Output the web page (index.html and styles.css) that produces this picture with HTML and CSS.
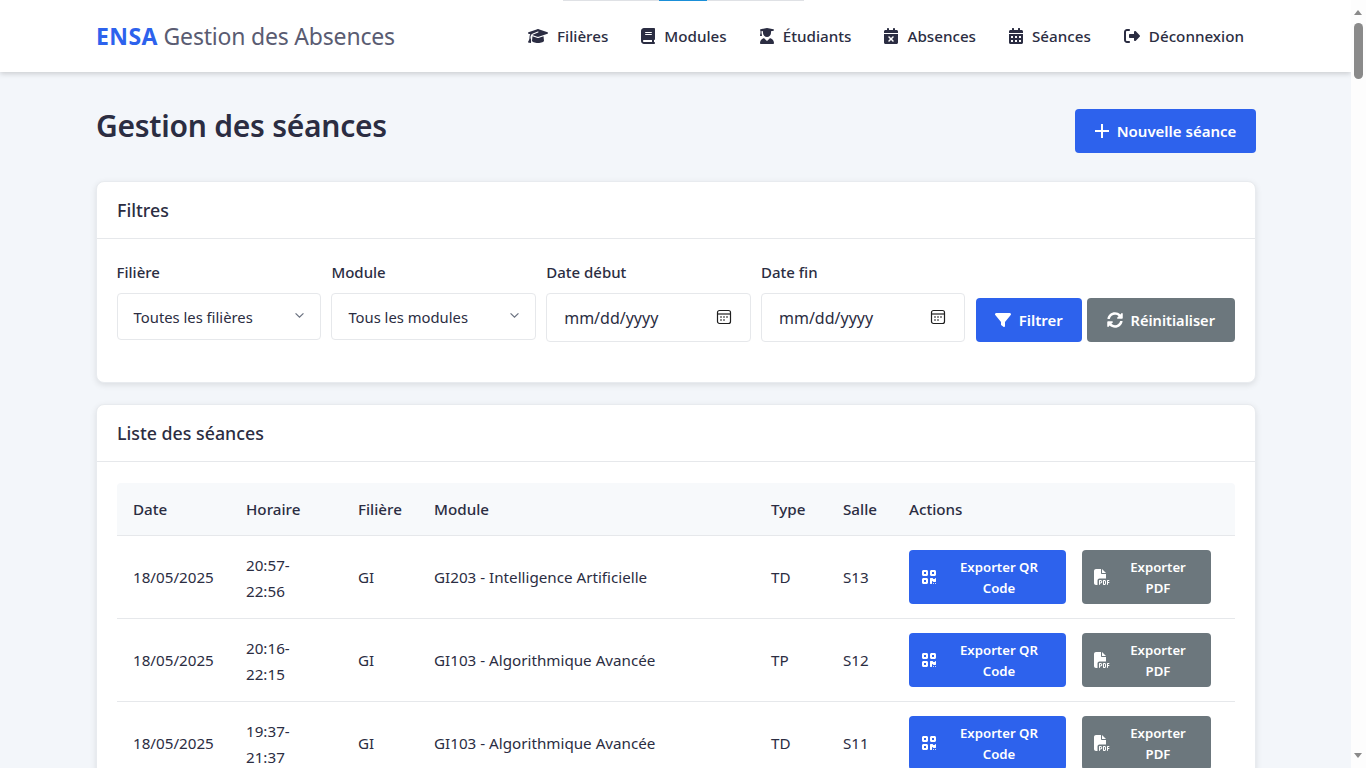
FILE: index.html
```html
<!DOCTYPE html>
<html lang="fr">
<head>
<meta charset="utf-8">
<title>Gestion des séances</title>
<link rel="stylesheet" href="styles.css">
</head>
<body>
<svg class="sprite" width="0" height="0">
<defs>
<symbol id="i-grad" viewBox="0 0 640 512"><path d="M320 32c-8.1 0-16.1 1.4-23.7 4.1L15.8 137.4C6.3 140.9 0 149.9 0 160s6.3 19.1 15.8 22.6l57.9 20.9C57.3 229.3 48 259.8 48 291.9v28.1c0 28.4-10.8 57.7-22.3 80.8c-6.5 13-13.9 25.8-22.5 37.6C0 442.7-.9 448.3 .9 453.4s6 8.9 11.2 10.2l64 16c4.2 1.1 8.7 .3 12.4-2s6.3-6.1 7.1-10.4c8.6-42.8 4.3-81.2-2.1-108.7C90.3 344.3 86 329.8 80 316.5V291.9c0-30.2 10.2-58.7 27.9-81.5c12.9-15.5 29.6-28 49.2-35.7l157-61.7c8.2-3.2 17.5 .8 20.7 9s-.8 17.5-9 20.7l-157 61.7c-12.4 4.9-23.3 12.4-32.2 21.6l159.6 57.6c7.6 2.7 15.6 4.1 23.7 4.1s16.1-1.4 23.7-4.1L624.2 182.6c9.5-3.4 15.8-12.5 15.8-22.6s-6.3-19.1-15.8-22.6L343.7 36.1C336.1 33.4 328.1 32 320 32zM128 408c0 35.3 86 72 192 72s192-36.7 192-72L496.7 262.6 354.5 314c-11.1 4-22.8 6-34.5 6s-23.5-2-34.5-6L143.3 262.6 128 408z"/></symbol>
<symbol id="i-book" viewBox="0 0 448 512"><path d="M96 0C43 0 0 43 0 96V416c0 53 43 96 96 96H384h32c17.7 0 32-14.3 32-32s-14.3-32-32-32V384c17.7 0 32-14.3 32-32V32c0-17.7-14.3-32-32-32H384 96zm0 384H352v64H96c-17.7 0-32-14.3-32-32s14.3-32 32-32zm32-240c0-8.8 7.2-16 16-16H336c8.8 0 16 7.2 16 16s-7.2 16-16 16H144c-8.8 0-16-7.2-16-16zm16 48H336c8.8 0 16 7.2 16 16s-7.2 16-16 16H144c-8.8 0-16-7.2-16-16s7.2-16 16-16z"/></symbol>
<symbol id="i-student" viewBox="0 0 448 512"><path d="M219.3 .5c3.1-.6 6.3-.6 9.4 0l200 40C439.9 42.7 448 52.6 448 64s-8.1 21.3-19.3 23.5L352 102.9V160c0 70.7-57.3 128-128 128s-128-57.3-128-128V102.9L48 93.3v65.1l15.7 78.4c.9 4.7-.3 9.6-3.3 13.3s-7.6 5.9-12.4 5.9H16c-4.8 0-9.3-2.1-12.4-5.9s-4.3-8.6-3.3-13.3L16 158.4V86.6C6.5 83.3 0 74.3 0 64C0 52.6 8.1 42.7 19.3 40.5l200-40zM111.9 327.7c10.5-3.4 21.8 .4 29.4 8.5l71 75.5c6.3 6.7 17 6.7 23.3 0l71-75.5c7.6-8.1 18.9-11.9 29.4-8.5C401 348.6 448 409.4 448 481.3c0 17-13.8 30.7-30.7 30.7H30.7C13.8 512 0 498.2 0 481.3c0-71.9 47-132.7 111.9-153.6z"/></symbol>
<symbol id="i-xcal" viewBox="0 0 448 512"><path d="M128 0c17.7 0 32 14.3 32 32V64H288V32c0-17.7 14.3-32 32-32s32 14.3 32 32V64h48c26.5 0 48 21.5 48 48v48H0V112C0 85.5 21.5 64 48 64H96V32c0-17.7 14.3-32 32-32zM0 192H448V464c0 26.5-21.5 48-48 48H48c-26.5 0-48-21.5-48-48V192zM305 305c9.4-9.4 9.4-24.6 0-33.9s-24.6-9.4-33.9 0l-47 47-47-47c-9.4-9.4-24.6-9.4-33.9 0s-9.4 24.6 0 33.9l47 47-47 47c-9.4 9.4-9.4 24.6 0 33.9s24.6 9.4 33.9 0l47-47 47 47c9.4 9.4 24.6 9.4 33.9 0s9.4-24.6 0-33.9l-47-47 47-47z"/></symbol>
<symbol id="i-cal" viewBox="0 0 448 512"><path d="M0 464c0 26.5 21.5 48 48 48h352c26.5 0 48-21.5 48-48V192H0v272zm320-196c0-6.6 5.4-12 12-12h40c6.6 0 12 5.4 12 12v40c0 6.6-5.4 12-12 12h-40c-6.6 0-12-5.4-12-12v-40zm0 128c0-6.6 5.4-12 12-12h40c6.6 0 12 5.4 12 12v40c0 6.6-5.4 12-12 12h-40c-6.6 0-12-5.4-12-12v-40zM192 268c0-6.6 5.4-12 12-12h40c6.6 0 12 5.4 12 12v40c0 6.6-5.4 12-12 12h-40c-6.6 0-12-5.4-12-12v-40zm0 128c0-6.6 5.4-12 12-12h40c6.6 0 12 5.4 12 12v40c0 6.6-5.4 12-12 12h-40c-6.6 0-12-5.4-12-12v-40zM64 268c0-6.6 5.4-12 12-12h40c6.6 0 12 5.4 12 12v40c0 6.6-5.4 12-12 12H76c-6.6 0-12-5.4-12-12v-40zm0 128c0-6.6 5.4-12 12-12h40c6.6 0 12 5.4 12 12v40c0 6.6-5.4 12-12 12H76c-6.6 0-12-5.4-12-12v-40zM400 64h-48V16c0-8.8-7.2-16-16-16h-32c-8.8 0-16 7.2-16 16v48H160V16c0-8.8-7.2-16-16-16h-32c-8.8 0-16 7.2-16 16v48H48C21.5 64 0 85.5 0 112v48h448v-48c0-26.5-21.5-48-48-48z"/></symbol>
<symbol id="i-out" viewBox="0 0 512 512"><path d="M377.9 105.9L500.7 228.7c7.2 7.2 11.3 17.1 11.3 27.3s-4.1 20.1-11.3 27.3L377.9 406.1c-6.4 6.4-15 9.9-24 9.9c-18.7 0-33.9-15.2-33.9-33.9l0-62.1-128 0c-17.7 0-32-14.3-32-32l0-64c0-17.7 14.3-32 32-32l128 0 0-62.1c0-18.7 15.2-33.9 33.9-33.9c9 0 17.6 3.6 24 9.9zM160 96L96 96c-17.7 0-32 14.3-32 32l0 256c0 17.7 14.3 32 32 32l64 0c17.7 0 32 14.3 32 32s-14.3 32-32 32l-64 0c-53 0-96-43-96-96L0 128C0 75 43 32 96 32l64 0c17.7 0 32 14.3 32 32s-14.3 32-32 32z"/></symbol>
<symbol id="i-qr" viewBox="0 0 448 512"><path d="M0 80C0 53.5 21.5 32 48 32h96c26.5 0 48 21.5 48 48v96c0 26.5-21.5 48-48 48H48c-26.5 0-48-21.5-48-48V80zM64 96v64h64V96H64zM0 336c0-26.5 21.5-48 48-48h96c26.5 0 48 21.5 48 48v96c0 26.5-21.5 48-48 48H48c-26.5 0-48-21.5-48-48V336zm64 16v64h64V352H64zM304 32h96c26.5 0 48 21.5 48 48v96c0 26.5-21.5 48-48 48H304c-26.5 0-48-21.5-48-48V80c0-26.5 21.5-48 48-48zm80 64H320v64h64V96zM256 304c0-8.8 7.2-16 16-16h64c8.8 0 16 7.2 16 16s7.2 16 16 16h32c8.8 0 16-7.2 16-16s7.2-16 16-16s16 7.2 16 16v96c0 8.8-7.2 16-16 16H368c-8.8 0-16-7.2-16-16s-7.2-16-16-16s-16 7.2-16 16v64c0 8.8-7.2 16-16 16H272c-8.8 0-16-7.2-16-16V304zM368 480a16 16 0 1 1 0-32 16 16 0 1 1 0 32zm64 0a16 16 0 1 1 0-32 16 16 0 1 1 0 32z"/></symbol>
<symbol id="i-pdf" viewBox="0 0 512 512"><path d="M0 64C0 28.7 28.7 0 64 0H224V128c0 17.7 14.3 32 32 32H384V304H176c-35.3 0-64 28.7-64 64V512H64c-35.3 0-64-28.7-64-64V64zm384 64H256V0L384 128zM176 352h32c30.9 0 56 25.1 56 56s-25.1 56-56 56H192v32c0 8.8-7.2 16-16 16s-16-7.2-16-16V448 368c0-8.8 7.2-16 16-16zm32 80c13.3 0 24-10.7 24-24s-10.7-24-24-24H192v48h16zm96-80h32c26.5 0 48 21.5 48 48v64c0 26.5-21.5 48-48 48H304c-8.8 0-16-7.2-16-16V368c0-8.8 7.2-16 16-16zm32 128c8.8 0 16-7.2 16-16V400c0-8.8-7.2-16-16-16H320v96h16zm80-112c0-8.8 7.2-16 16-16h48c8.8 0 16 7.2 16 16s-7.2 16-16 16H448v32h32c8.8 0 16 7.2 16 16s-7.2 16-16 16H448v48c0 8.8-7.2 16-16 16s-16-7.2-16-16V432 368z"/></symbol>
</defs>
</svg>

<div class="tab-strip"><span class="tab-seg"></span><span class="tab-seg tab-active"></span><span class="tab-seg tab-last"></span></div>

<div class="scrollbar"><span class="sb-up"></span><span class="sb-thumb"></span><span class="sb-down"></span></div>

<nav class="navbar">
  <div class="container nav-inner">
    <a class="brand"><strong>ENSA</strong> Gestion des Absences</a>
    <ul class="menu">
      <li><svg class="ico ico-grad"><use href="#i-grad"/></svg>Filières</li>
      <li><svg class="ico"><use href="#i-book"/></svg>Modules</li>
      <li><svg class="ico"><use href="#i-student"/></svg>Étudiants</li>
      <li><svg class="ico"><use href="#i-xcal"/></svg>Absences</li>
      <li><svg class="ico"><use href="#i-cal"/></svg>Séances</li>
      <li><svg class="ico ico-out"><use href="#i-out"/></svg>Déconnexion</li>
    </ul>
  </div>
</nav>

<main class="container">
  <div class="page-head">
    <h1>Gestion des séances</h1>
    <button class="btn btn-primary btn-new"><svg class="plus" viewBox="0 0 14 14"><path d="M7 0v14M0 7h14"/></svg>Nouvelle séance</button>
  </div>

  <section class="card filters-card">
    <header class="card-head">Filtres</header>
    <div class="card-body filters">
      <div class="field"><label>Filière</label><div class="select">Toutes les filières<svg class="chev" viewBox="0 0 12 8"><path d="M1.5 1.5 6 6l4.5-4.5"/></svg></div></div>
      <div class="field"><label>Module</label><div class="select">Tous les modules<svg class="chev" viewBox="0 0 12 8"><path d="M1.5 1.5 6 6l4.5-4.5"/></svg></div></div>
      <div class="field"><label>Date début</label><div class="date">mm/dd/yyyy<svg class="calpick" viewBox="0 0 16 16"><rect x="1.5" y="1.5" width="13" height="13" rx="2"/><path d="M1.5 5h13"/><path d="M4 8h2M7 8h2M10 8h2M4 11h2M7 11h2"/></svg></div></div>
      <div class="field"><label>Date fin</label><div class="date">mm/dd/yyyy<svg class="calpick" viewBox="0 0 16 16"><rect x="1.5" y="1.5" width="13" height="13" rx="2"/><path d="M1.5 5h13"/><path d="M4 8h2M7 8h2M10 8h2M4 11h2M7 11h2"/></svg></div></div>
      <div class="filter-actions">
        <button class="btn btn-primary btn-filter"><svg class="ico-b" viewBox="0 0 512 512"><path d="M3.9 54.9C10.5 40.9 24.5 32 40 32H472c15.5 0 29.5 8.9 36.1 22.9s4.6 30.5-5.2 42.5L320 320.9V448c0 12.1-6.8 23.2-17.7 28.6s-23.8 4.3-33.5-3l-64-48c-8.1-6-12.8-15.5-12.8-25.6V320.9L9 97.3C-.7 85.4-2.8 68.8 3.9 54.9z"/></svg>Filtrer</button>
        <button class="btn btn-gray btn-filter btn-reset"><svg class="ico-b" viewBox="0 0 512 512"><path d="M370.72 133.28C339.458 104.008 298.888 87.962 255.848 88c-77.458.068-144.328 53.178-162.791 126.85-1.344 5.363-6.122 9.15-11.651 9.15H24.103c-7.498 0-13.194-6.807-11.807-14.176C33.933 94.924 134.813 8 256 8c66.448 0 126.791 26.136 171.315 68.685L463.03 40.97C478.149 25.851 504 36.559 504 57.941V192c0 13.255-10.745 24-24 24H345.941c-21.382 0-32.09-25.851-16.971-40.971l41.75-41.749zM32 296h134.059c21.382 0 32.09 25.851 16.971 40.971l-41.75 41.75c31.262 29.273 71.835 45.319 114.876 45.28 77.418-.07 144.315-53.144 162.787-126.849 1.344-5.363 6.122-9.15 11.651-9.15h57.304c7.498 0 13.194 6.807 11.807 14.176C478.067 417.076 377.187 504 256 504c-66.448 0-126.791-26.136-171.315-68.685L48.97 471.03C33.851 486.149 8 475.441 8 454.059V320c0-13.255 10.745-24 24-24z"/></svg>Réinitialiser</button>
      </div>
    </div>
  </section>

  <section class="card">
    <header class="card-head">Liste des séances</header>
    <div class="card-body list-body">
      <table class="table">
        <thead><tr><th class="c-date">Date</th><th class="c-time">Horaire</th><th class="c-fil">Filière</th><th class="c-mod">Module</th><th class="c-type">Type</th><th class="c-salle">Salle</th><th>Actions</th></tr></thead>
        <tbody>
          <tr><td>18/05/2025</td><td>20:57-<br>22:56</td><td>GI</td><td>GI203 - Intelligence Artificielle</td><td>TD</td><td>S13</td><td class="c-acts"><div class="acts"><button class="btn-x btn-primary btn-qr"><svg class="ico-x"><use href="#i-qr"/></svg><span>Exporter QR Code</span></button><button class="btn-x btn-gray btn-pdf"><svg class="ico-x"><use href="#i-pdf"/></svg><span>Exporter PDF</span></button></div></td></tr>
          <tr><td>18/05/2025</td><td>20:16-<br>22:15</td><td>GI</td><td>GI103 - Algorithmique Avancée</td><td>TP</td><td>S12</td><td class="c-acts"><div class="acts"><button class="btn-x btn-primary btn-qr"><svg class="ico-x"><use href="#i-qr"/></svg><span>Exporter QR Code</span></button><button class="btn-x btn-gray btn-pdf"><svg class="ico-x"><use href="#i-pdf"/></svg><span>Exporter PDF</span></button></div></td></tr>
          <tr><td>18/05/2025</td><td>19:37-<br>21:37</td><td>GI</td><td>GI103 - Algorithmique Avancée</td><td>TD</td><td>S11</td><td class="c-acts"><div class="acts"><button class="btn-x btn-primary btn-qr"><svg class="ico-x"><use href="#i-qr"/></svg><span>Exporter QR Code</span></button><button class="btn-x btn-gray btn-pdf"><svg class="ico-x"><use href="#i-pdf"/></svg><span>Exporter PDF</span></button></div></td></tr>
        </tbody>
      </table>
    </div>
  </section>
</main>
</body>
</html>
```
FILE: styles.css
```css
* { box-sizing: border-box; }
html { font-size: 16px; }
body { margin: 0; width: 1351px; background: #f3f6fa; color: #2b2d42; font-family: "Noto Sans", "Open Sans", sans-serif; font-size: 15px; line-height: 1.5; }
.sprite { position: absolute; }
.container { width: 1160px; margin: 0 0 0 96px; }

.tab-strip { position: absolute; top: 0; left: 563px; display: flex; height: 1px; z-index: 5; }
.tab-seg { width: 96px; background: #dfe1e5; }
.tab-active { width: 48px; background: #1a8fd8; }
.tab-last { width: 97px; }

.scrollbar { position: fixed; top: 0; right: 0; width: 15px; height: 768px; background: #fdfdfd; z-index: 10; }
.sb-up, .sb-down { position: absolute; left: 3px; width: 0; height: 0; border-left: 4.5px solid transparent; border-right: 4.5px solid transparent; }
.sb-up { top: 10px; border-bottom: 5px solid #8a8a8a; }
.sb-down { top: 753px; border-top: 5px solid #8a8a8a; }
.sb-thumb { position: absolute; left: 3px; top: 23px; width: 9px; height: 56px; border-radius: 4.5px; background: #8a8a8a; }

.navbar { background: #fff; height: 72px; box-shadow: 0 2px 5px rgba(0,0,0,.16); }
.nav-inner { display: flex; align-items: center; justify-content: space-between; height: 72px; }
.brand { font-size: 23px; color: #5a5c72; letter-spacing: -.2px; }
.brand strong { color: #2d62ed; font-weight: 700; letter-spacing: .4px; }
.menu { list-style: none; display: flex; margin: 0 12px 0 0; padding: 0; gap: 33px; font-size: 15.2px; font-weight: 500; }
.menu li { display: flex; align-items: center; white-space: nowrap; }
.ico { height: 16px; width: 14px; margin-right: 9px; fill: #2b2d42; }
.ico-grad { width: 20px; }
.ico-out { width: 16px; }

.page-head { display: flex; justify-content: space-between; align-items: flex-start; padding-top: 37px; height: 109px; }
h1 { margin: -7px 0 0; font-size: 30px; font-weight: 600; line-height: 48px; letter-spacing: -.25px; color: #2b2d42; }

.btn, .btn-x { border: 0; border-radius: 4px; color: #fff; font-family: inherit; font-weight: 600; display: flex; align-items: center; justify-content: center; }
.btn-primary { background: #2d62ed; }
.btn-gray { background: #6c777d; }
.btn-new { width: 181px; height: 44px; font-size: 15px; }
.plus { width: 14px; height: 14px; margin-right: 8px; stroke: #fff; stroke-width: 2; fill: none; }

.card { background: #fff; border: 1px solid #e8ebef; border-radius: 8px; box-shadow: 0 2px 6px rgba(0,0,0,.1); margin-bottom: 21px; }
.card-head { height: 57px; padding: 0 20px; display: flex; align-items: center; font-size: 17.8px; font-weight: 500; border-bottom: 1px solid #e6e8eb; }
.card-body { padding: 21px 20px; }
.filters-card { height: 202px; }
.filters { display: flex; gap: 10.3px; align-items: flex-start; padding-left: 19.6px; }
.field { width: 204.5px; }
.field label { display: block; font-weight: 500; font-size: 15px; line-height: 22px; margin-bottom: 10px; margin-top: 1px; }
.select { height: 47px; border: 1px solid #e6e8eb; border-radius: 4px; padding: 1px 15px 0 16px; display: flex; align-items: center; justify-content: space-between; font-size: 14.8px; }
.date { height: 49px; border: 1px solid #e6e8eb; border-radius: 4px; padding: 0 18px 0 17px; display: flex; align-items: center; justify-content: space-between; font-size: 16px; }
.chev { width: 11px; height: 7px; fill: none; stroke: #6b7280; stroke-width: 1.4; margin-top: -3px; }
.calpick { width: 16px; height: 16px; fill: none; stroke: #1f1f1f; stroke-width: 1.2; margin-top: -1px; }
.filter-actions { display: flex; gap: 5px; margin-top: 38px; }
.btn-filter { height: 44px; font-size: 15px; width: 106px; }
.btn-reset { width: 148px; font-size: 14.6px; }
.ico-b { width: 16px; height: 16px; fill: #fff; margin-right: 8px; }

.list-body { padding-bottom: 40px; }
.table { width: 100%; border-collapse: separate; border-spacing: 0; font-size: 15.2px; }
.table th { background: #f7f9fb; text-align: left; font-weight: 500; height: 53px; padding: 0 16px; border-bottom: 1px solid #e6e8eb; }
.table th:first-child { border-top-left-radius: 4px; }
.table th:last-child { border-top-right-radius: 4px; }
.table td { padding: 1px 16px 0; height: 83px; border-bottom: 1px solid #e6e8eb; }
.table td.c-acts { padding: 0 16px; }
.c-date { width: 113px; } .c-time { width: 112px; } .c-fil { width: 76px; } .c-mod { width: 337px; } .c-type { width: 72px; } .c-salle { width: 66px; }
.table th, .table td { white-space: nowrap; }
.table td:nth-child(2) { line-height: 26px; }

.acts { display: flex; gap: 16px; }
.btn-x { height: 54px; font-size: 13.2px; line-height: 21px; padding: 0 12px; white-space: normal; gap: 7px; }
.btn-x span { flex: 1; text-align: center; padding-top: 2px; }
.btn-qr { width: 157px; }
.btn-pdf { width: 129px; }
.ico-x { width: 16px; height: 16px; fill: #fff; flex: none; }
```
